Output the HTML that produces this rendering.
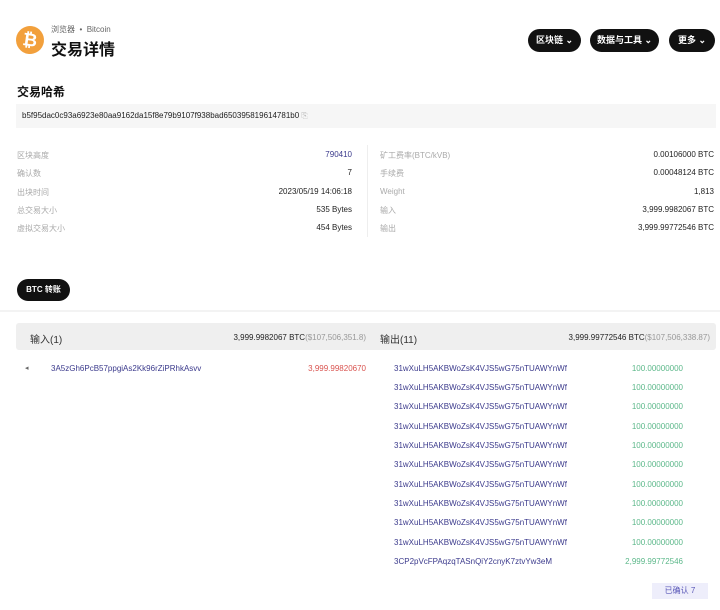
<!DOCTYPE html>
<html><head><meta charset="utf-8"><style>
*{margin:0;padding:0;box-sizing:border-box}
body{width:720px;height:610px;background:#fff;font-family:"Liberation Sans","Noto Sans CJK SC",sans-serif;position:relative;overflow:hidden;color:#222}
.a{position:absolute;white-space:nowrap}
.btn{position:absolute;top:29px;height:23px;background:#111;color:#fff;border-radius:12px;font-size:9px;font-weight:bold;line-height:23px;text-align:center}
.lbl{position:absolute;font-size:8px;color:#aaa}
.val{position:absolute;font-size:8px;color:#222;text-align:right}
.addr{position:absolute;font-size:8px;color:#3b3a8c;left:394px}
.amt{position:absolute;font-size:8px;color:#5cb88a;right:37px}
</style></head><body>
<div class="a" style="left:16px;top:26px;width:28px;height:28px;border-radius:50%;background:#f2a03c;color:#fff;font-weight:bold;font-size:18px;text-align:center;line-height:28px;transform:rotate(8deg)">₿</div>
<div class="a" style="left:51px;top:24px;font-size:8px;color:#666">浏览器 &nbsp;•&nbsp; Bitcoin</div>
<div class="a" style="left:51px;top:36px;font-size:16px;font-weight:bold;color:#111">交易详情</div>
<div class="btn" style="left:528px;width:53px">区块链 ⌄</div>
<div class="btn" style="left:590px;width:69px">数据与工具 ⌄</div>
<div class="btn" style="left:669px;width:46px">更多 ⌄</div>
<div class="a" style="left:17px;top:83px;font-size:12px;font-weight:bold;color:#111">交易哈希</div>
<div class="a" style="left:16px;top:104px;width:700px;height:24px;background:#f6f6f6"></div>
<div class="a" style="left:22px;top:111px;font-size:8px;color:#222">b5f95dac0c93a6923e80aa9162da15f8e79b9107f938bad650395819614781b0 <span style="color:#bbb">⎘</span></div>
<div class="a" style="left:367px;top:145px;width:1px;height:92px;background:#eee"></div>
<div class="lbl" style="left:17px;top:150px">区块高度</div><div class="val" style="right:368px;top:150px;color:#3b3a8c">790410</div>
<div class="lbl" style="left:17px;top:168px">确认数</div><div class="val" style="right:368px;top:168px">7</div>
<div class="lbl" style="left:17px;top:187px">出块时间</div><div class="val" style="right:368px;top:187px">2023/05/19 14:06:18</div>
<div class="lbl" style="left:17px;top:205px">总交易大小</div><div class="val" style="right:368px;top:205px">535 Bytes</div>
<div class="lbl" style="left:17px;top:223px">虚拟交易大小</div><div class="val" style="right:368px;top:223px">454 Bytes</div>
<div class="lbl" style="left:380px;top:150px">矿工费率(BTC/kVB)</div><div class="val" style="right:6px;top:150px">0.00106000 BTC</div>
<div class="lbl" style="left:380px;top:168px">手续费</div><div class="val" style="right:6px;top:168px">0.00048124 BTC</div>
<div class="lbl" style="left:380px;top:187px">Weight</div><div class="val" style="right:6px;top:187px">1,813</div>
<div class="lbl" style="left:380px;top:205px">输入</div><div class="val" style="right:6px;top:205px">3,999.9982067 BTC</div>
<div class="lbl" style="left:380px;top:223px">输出</div><div class="val" style="right:6px;top:223px">3,999.99772546 BTC</div>
<div class="a" style="left:17px;top:279px;width:53px;height:22px;background:#111;color:#fff;border-radius:11px;font-size:8px;font-weight:bold;line-height:22px;text-align:center">BTC 转账</div>
<div class="a" style="left:0;top:310px;width:720px;height:2px;background:#f3f3f3"></div>
<div class="a" style="left:16px;top:323px;width:700px;height:27px;background:#efefef;border-radius:3px"></div>
<div class="a" style="left:30px;top:331px;font-size:10px;color:#333">输入(1)</div>
<div class="a" style="right:354px;top:333px;font-size:8px;color:#222">3,999.9982067 BTC<span style="color:#999">($107,506,351.8)</span></div>
<div class="a" style="left:380px;top:331px;font-size:10px;color:#333">输出(11)</div>
<div class="a" style="right:10px;top:333px;font-size:8px;color:#222">3,999.99772546 BTC<span style="color:#999">($107,506,338.87)</span></div>
<div class="a" style="left:25px;top:364px;font-size:7px;color:#666">◂</div>
<div class="a" style="left:51px;top:364px;font-size:8px;color:#3b3a8c">3A5zGh6PcB57ppgiAs2Kk96rZiPRhkAsvv</div>
<div class="a" style="right:354px;top:364px;font-size:8px;color:#d9534f">3,999.99820670</div>
<div class="addr" style="top:364px">31wXuLH5AKBWoZsK4VJS5wG75nTUAWYnWf</div><div class="amt" style="top:364px">100.00000000</div>
<div class="addr" style="top:383px">31wXuLH5AKBWoZsK4VJS5wG75nTUAWYnWf</div><div class="amt" style="top:383px">100.00000000</div>
<div class="addr" style="top:402px">31wXuLH5AKBWoZsK4VJS5wG75nTUAWYnWf</div><div class="amt" style="top:402px">100.00000000</div>
<div class="addr" style="top:422px">31wXuLH5AKBWoZsK4VJS5wG75nTUAWYnWf</div><div class="amt" style="top:422px">100.00000000</div>
<div class="addr" style="top:441px">31wXuLH5AKBWoZsK4VJS5wG75nTUAWYnWf</div><div class="amt" style="top:441px">100.00000000</div>
<div class="addr" style="top:460px">31wXuLH5AKBWoZsK4VJS5wG75nTUAWYnWf</div><div class="amt" style="top:460px">100.00000000</div>
<div class="addr" style="top:480px">31wXuLH5AKBWoZsK4VJS5wG75nTUAWYnWf</div><div class="amt" style="top:480px">100.00000000</div>
<div class="addr" style="top:499px">31wXuLH5AKBWoZsK4VJS5wG75nTUAWYnWf</div><div class="amt" style="top:499px">100.00000000</div>
<div class="addr" style="top:518px">31wXuLH5AKBWoZsK4VJS5wG75nTUAWYnWf</div><div class="amt" style="top:518px">100.00000000</div>
<div class="addr" style="top:538px">31wXuLH5AKBWoZsK4VJS5wG75nTUAWYnWf</div><div class="amt" style="top:538px">100.00000000</div>
<div class="addr" style="top:557px">3CP2pVcFPAqzqTASnQiY2cnyK7ztvYw3eM</div><div class="amt" style="top:557px">2,999.99772546</div>
<div class="a" style="left:652px;top:583px;width:56px;height:16px;background:#eeeefb;color:#5a58b8;font-size:8px;line-height:16px;text-align:center">已确认 7</div>
</body></html>
